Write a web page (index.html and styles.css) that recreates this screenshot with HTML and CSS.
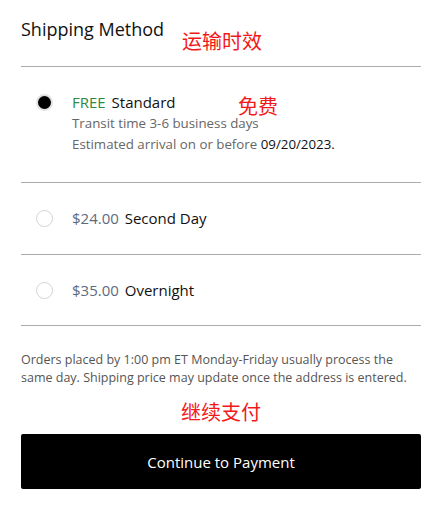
FILE: index.html
```html
<!doctype html>
<html lang="en">
<head>
  <meta charset="utf-8" />
  <meta name="viewport" content="width=device-width,initial-scale=1" />
  <title>Shipping Method</title>
  <link rel="stylesheet" href="styles.css">
</head>
<body>
  <div class="wrap">
    <header class="head">
      <h2>Shipping Method</h2>
      <span class="note note-head">运输时效</span>
    </header>

    <ul class="options">
      <li class="option selected">
        <span class="radio"></span>
        <div class="info">
          <div class="label"><span class="free">FREE</span> Standard</div>
          <div class="desc">Transit time 3-6 business days</div>
          <div class="desc">Estimated arrival on or before <span class="date">09/20/2023.</span></div>
        </div>
        <span class="note note-free">免费</span>
      </li>
      <li class="option">
        <span class="radio"></span>
        <div class="info">
          <div class="label"><span class="price">$24.00</span> Second Day</div>
        </div>
      </li>
      <li class="option">
        <span class="radio"></span>
        <div class="info">
          <div class="label"><span class="price">$35.00</span> Overnight</div>
        </div>
      </li>
    </ul>

    <p class="notice">Orders placed by 1:00 pm ET Monday-Friday usually process the same day. Shipping price may update once the address is entered.</p>

    <div class="note note-pay">继续支付</div>
    <button class="pay">Continue to Payment</button>
  </div>
</body>
</html>
```

FILE: styles.css
```css
:root { --line:#ababab; --muted:#666; --red:#f21818; }
html, body {
  margin: 0;
  background: #fff; color: #111;
  font-family: "Open Sans", "Noto Sans", sans-serif;
}
.wrap { padding: 15px 21px 20px; }

.note {
  color: var(--red);
  font-family: "Noto Sans CJK SC", sans-serif;
  font-size: 20px; line-height: 1;
}

.head { position: relative; padding-bottom: 23px; border-bottom: 1px solid var(--line); }
.head h2 { margin: 0; font-size: 18px; font-weight: 400; line-height: 28px; }
.note-head { position: absolute; left: 161px; top: 16px; }

.options { list-style: none; margin: 0; padding: 0; }
.option {
  position: relative;
  display: flex; align-items: center; gap: 19px;
  padding: 24px 0 25px 15px;
  border-bottom: 1px solid var(--line);
}
.option:last-child { padding-bottom: 24px; }
.option.selected { align-items: flex-start; padding: 24px 0 27px 15px; }
.option.selected .radio { margin-top: 3px; }

.radio {
  flex: none; box-sizing: border-box;
  width: 17px; height: 17px; border-radius: 50%;
  border: 1px solid #d4d4d4; background: #fff;
}
.selected .radio { border: 2px solid #e2e2e2; background: #000; }

.label { font-size: 15px; line-height: 22px; }
.label .free { color: #2d8a3e; margin-right: 2px; }
.label .price { color: #5d6a7e; margin-right: 2px; }
.desc { font-size: 13.3px; line-height: 21px; color: var(--muted); }
.desc .date { color: #111; }
.note-free { position: absolute; left: 217px; top: 32px; line-height: 14px; }

.notice { margin: 25px 0 0; font-size: 12.5px; line-height: 18px; color: #555; }
.note-pay { text-align: center; margin: 15px 0 12px; }

.pay {
  display: block; width: 100%; height: 55px;
  background: #000; color: #fff; border: 0; border-radius: 2px;
  font-family: inherit; font-size: 15px; cursor: pointer;
}
```
